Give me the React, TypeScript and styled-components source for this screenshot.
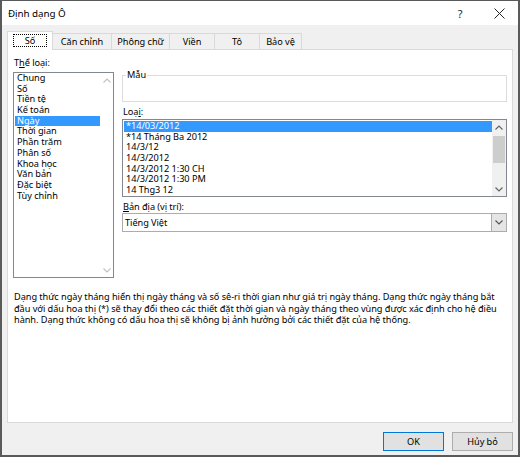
import React from "react";
import styled, { createGlobalStyle } from "styled-components";

const Global = createGlobalStyle`
  html, body { margin: 0; padding: 0; background: #fff; }
  body {
    font-family: "Noto Sans", "Liberation Sans", sans-serif;
    font-size: 9.2px;
    letter-spacing: -0.05px;
    color: #000;
  }
  * { box-sizing: border-box; }
`;

const Window = styled.div`
  width: 520px;
  height: 457px;
  border: 2px solid #5a5a5a;
  border-top-width: 1px;
  background: #f0f0f0;
  display: flex;
  flex-direction: column;
`;

const TitleBar = styled.div`
  height: 24px;
  background: #fff;
  display: flex;
  align-items: center;
  padding-left: 6px;
`;

const Title = styled.span`
  flex: 1;
  font-size: 9.8px;
`;

const TitleButton = styled.div<{ $w: number }>`
  width: ${(p) => p.$w}px;
  height: 24px;
  display: flex;
  align-items: center;
  justify-content: center;
  font-size: 11px;
  color: #222;
`;

const Body = styled.div`
  flex: 1;
  display: flex;
  flex-direction: column;
  padding: 6px 5px 0 5px;
`;

const TabStrip = styled.div`
  display: flex;
  align-items: flex-end;
  height: 18px;
  position: relative;
  z-index: 1;
`;

const Tab = styled.div<{ $w: number; $active?: boolean }>`
  width: ${(p) => p.$w}px;
  height: ${(p) => (p.$active ? 19 : 16)}px;
  margin-bottom: ${(p) => (p.$active ? -1 : 0)}px;
  margin-left: -1px;
  &:first-child { margin-left: 0; }
  background: ${(p) => (p.$active ? "#fff" : "#f0f0f0")};
  border: 1px solid #d9d9d9;
  border-bottom: none;
  display: flex;
  align-items: center;
  justify-content: center;
  white-space: nowrap;
  padding-bottom: ${(p) => (p.$active ? 2 : 0)}px;
`;

const FocusBox = styled.span`
  border: 1px dotted #000;
  padding: 0 11px;
  line-height: 11px;
`;

const Panel = styled.div`
  width: 506px;
  height: 374px;
  background: #fff;
  border: 1px solid #d9d9d9;
  padding: 7px 4px 0 5px;
  display: flex;
  flex-direction: column;
`;

const TopRow = styled.div`
  display: flex;
  gap: 8px;
`;

const LeftCol = styled.div`
  width: 101px;
  display: flex;
  flex-direction: column;
`;

const RightCol = styled.div`
  width: 385px;
  display: flex;
  flex-direction: column;
`;

const Label = styled.div<{ $mt?: number; $mb?: number }>`
  line-height: 12px;
  padding-left: 1px;
  margin-top: ${(p) => p.$mt ?? 0}px;
  margin-bottom: ${(p) => p.$mb ?? 0}px;
  white-space: nowrap;
`;

const ListBox = styled.div<{ $h: number }>`
  height: ${(p) => p.$h}px;
  border: 1px solid #828790;
  background: #fff;
  display: flex;
`;

const Items = styled.div<{ $pt: number }>`
  flex: 1;
  padding: ${(p) => p.$pt}px 0 0 1px;
`;

const Item = styled.div<{ $sel?: boolean }>`
  height: 10.7px;
  line-height: 10.7px;
  padding-left: 2px;
  white-space: nowrap;
  background: ${(p) => (p.$sel ? "#3399ff" : "transparent")};
  color: ${(p) => (p.$sel ? "#fff" : "#000")};
`;

const ScrollBar = styled.div<{ $w: number; $track: string }>`
  width: ${(p) => p.$w}px;
  background: ${(p) => p.$track};
  display: flex;
  flex-direction: column;
  align-items: stretch;
`;

const ArrowCell = styled.div`
  height: 14px;
  display: flex;
  align-items: center;
  justify-content: center;
`;

const Track = styled.div`
  flex: 1;
  display: flex;
  flex-direction: column;
  padding: 2px 1px 0 1px;
`;

const Thumb = styled.div`
  height: 27px;
  background: #cdcdcd;
`;

const GroupBox = styled.fieldset`
  margin: 12px 0 0 0;
  padding: 0;
  border: 1px solid #dcdcdc;
  min-width: 0;
`;

const Legend = styled.legend`
  margin-left: 3px;
  padding: 0 1px;
  line-height: 12px;
`;

const GroupInner = styled.div`
  height: 20px;
`;

const Select = styled.div`
  height: 19px;
  border: 1px solid #acacac;
  background: #fff;
  display: flex;
  align-items: stretch;
`;

const SelectText = styled.div`
  flex: 1;
  padding-left: 2px;
  display: flex;
  align-items: center;
`;

const SelectButton = styled.div`
  width: 15px;
  background: #e5e5e5;
  border-left: 1px solid #acacac;
  display: flex;
  align-items: center;
  justify-content: center;
`;

const Description = styled.p`
  margin: 13px 0 0 1px;
  line-height: 11.5px;
  width: 495px;
`;

const ButtonRow = styled.div`
  display: flex;
  justify-content: flex-end;
  gap: 8px;
  margin-top: 9px;
`;

const Button = styled.div<{ $primary?: boolean }>`
  width: 61px;
  height: 19px;
  background: #e1e1e1;
  border: 1px solid ${(p) => (p.$primary ? "#0078d7" : "#adadad")};
  display: flex;
  align-items: center;
  justify-content: center;
`;

const Chevron = ({ up, color }: { up?: boolean; color: string }) => (
  <svg width="8" height="5" viewBox="0 0 8 5">
    <path
      d={up ? "M0.5 4.5 L4 1 L7.5 4.5" : "M0.5 0.5 L4 4 L7.5 0.5"}
      fill="none"
      stroke={color}
      strokeWidth="1.1"
    />
  </svg>
);

const categories = [
  "Chung",
  "Số",
  "Tiền tệ",
  "Kế toán",
  "Ngày",
  "Thời gian",
  "Phần trăm",
  "Phân số",
  "Khoa học",
  "Văn bản",
  "Đặc biệt",
  "Tùy chỉnh",
];

const types = [
  "*14/03/2012",
  "*14 Tháng Ba 2012",
  "14/3/12",
  "14/3/2012",
  "14/3/2012 1:30 CH",
  "14/3/2012 1:30 PM",
  "14 Thg3 12",
];

const tabs: { label: string; w: number }[] = [
  { label: "Căn chỉnh", w: 60 },
  { label: "Phông chữ", w: 59 },
  { label: "Viền", w: 46 },
  { label: "Tô", w: 46 },
  { label: "Bảo vệ", w: 43 },
];

export default function App() {
  return (
    <>
      <Global />
      <Window>
        <TitleBar>
          <Title>Định dạng Ô</Title>
          <TitleButton $w={40}>?</TitleButton>
          <TitleButton $w={38}>
            <svg width="11" height="11" viewBox="0 0 11 11">
              <path d="M0.5 0.5 L10.5 10.5 M10.5 0.5 L0.5 10.5" stroke="#222" strokeWidth="1" />
            </svg>
          </TitleButton>
        </TitleBar>
        <Body>
          <TabStrip>
            <Tab $w={46} $active>
              <FocusBox>Số</FocusBox>
            </Tab>
            {tabs.map((t) => (
              <Tab key={t.label} $w={t.w}>
                {t.label}
              </Tab>
            ))}
          </TabStrip>
          <Panel>
            <TopRow>
              <LeftCol>
                <Label $mb={3}>
                  T<u>h</u>ể loại:
                </Label>
                <ListBox $h={206}>
                  <Items $pt={0}>
                    {categories.map((c) => (
                      <Item key={c} $sel={c === "Ngày"}>
                        {c}
                      </Item>
                    ))}
                  </Items>
                  <ScrollBar $w={13} $track="#fff">
                    <ArrowCell>
                      <Chevron up color="#c2c2c2" />
                    </ArrowCell>
                    <Track />
                    <ArrowCell>
                      <Chevron color="#c2c2c2" />
                    </ArrowCell>
                  </ScrollBar>
                </ListBox>
              </LeftCol>
              <RightCol>
                <GroupBox>
                  <Legend>Mẫu</Legend>
                  <GroupInner />
                </GroupBox>
                <Label $mt={4} $mb={1}>
                  Loạ<u>i</u>:
                </Label>
                <ListBox $h={78}>
                  <Items $pt={1}>
                    {types.map((t, i) => (
                      <Item key={t} $sel={i === 0}>
                        {t}
                      </Item>
                    ))}
                  </Items>
                  <ScrollBar $w={14} $track="#f0f0f0">
                    <ArrowCell>
                      <Chevron up color="#606060" />
                    </ArrowCell>
                    <Track>
                      <Thumb />
                    </Track>
                    <ArrowCell>
                      <Chevron color="#606060" />
                    </ArrowCell>
                  </ScrollBar>
                </ListBox>
                <Label $mt={4}>
                  <u>B</u>ản địa (vị trí):
                </Label>
                <Select>
                  <SelectText>Tiếng Việt</SelectText>
                  <SelectButton>
                    <Chevron color="#555" />
                  </SelectButton>
                </Select>
              </RightCol>
            </TopRow>
            <Description>
              Dạng thức ngày tháng hiển thị ngày tháng và số sê-ri thời gian như giá trị ngày tháng. Dạng thức ngày tháng bắt
              đầu với dấu hoa thị (*) sẽ thay đổi theo các thiết đặt thời gian và ngày tháng theo vùng được xác định cho hệ điều
              hành. Dạng thức không có dấu hoa thị sẽ không bị ảnh hưởng bởi các thiết đặt của hệ thống.
            </Description>
          </Panel>
          <ButtonRow>
            <Button $primary>OK</Button>
            <Button>Hủy bỏ</Button>
          </ButtonRow>
        </Body>
      </Window>
    </>
  );
}
